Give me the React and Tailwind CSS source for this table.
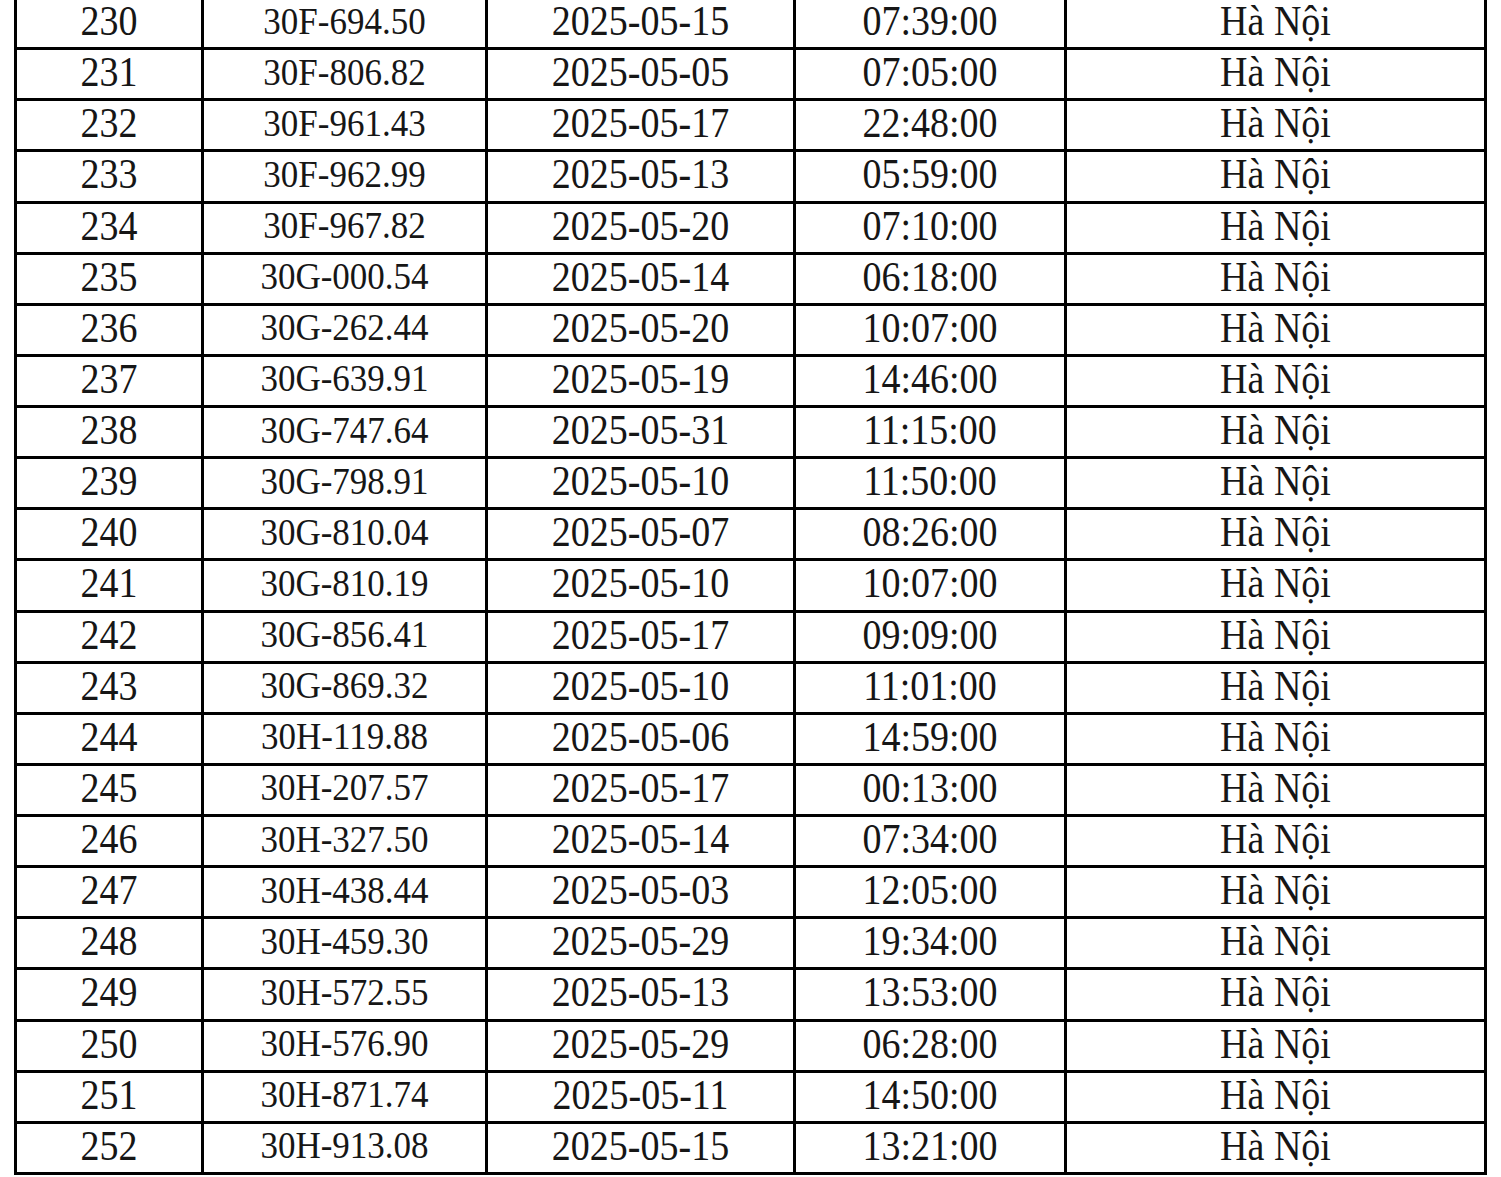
const ROWS = [
  ['230', '30F-694.50', '2025-05-15', '07:39:00'],
  ['231', '30F-806.82', '2025-05-05', '07:05:00'],
  ['232', '30F-961.43', '2025-05-17', '22:48:00'],
  ['233', '30F-962.99', '2025-05-13', '05:59:00'],
  ['234', '30F-967.82', '2025-05-20', '07:10:00'],
  ['235', '30G-000.54', '2025-05-14', '06:18:00'],
  ['236', '30G-262.44', '2025-05-20', '10:07:00'],
  ['237', '30G-639.91', '2025-05-19', '14:46:00'],
  ['238', '30G-747.64', '2025-05-31', '11:15:00'],
  ['239', '30G-798.91', '2025-05-10', '11:50:00'],
  ['240', '30G-810.04', '2025-05-07', '08:26:00'],
  ['241', '30G-810.19', '2025-05-10', '10:07:00'],
  ['242', '30G-856.41', '2025-05-17', '09:09:00'],
  ['243', '30G-869.32', '2025-05-10', '11:01:00'],
  ['244', '30H-119.88', '2025-05-06', '14:59:00'],
  ['245', '30H-207.57', '2025-05-17', '00:13:00'],
  ['246', '30H-327.50', '2025-05-14', '07:34:00'],
  ['247', '30H-438.44', '2025-05-03', '12:05:00'],
  ['248', '30H-459.30', '2025-05-29', '19:34:00'],
  ['249', '30H-572.55', '2025-05-13', '13:53:00'],
  ['250', '30H-576.90', '2025-05-29', '06:28:00'],
  ['251', '30H-871.74', '2025-05-11', '14:50:00'],
  ['252', '30H-913.08', '2025-05-15', '13:21:00'],
];

function Cell({ children, small }) {
  return (
    <div
      className={`flex items-center justify-center border-r-[3px] border-black pb-[4px] ${
        small ? 'text-[35px]' : 'text-[38px]'
      }`}
    >
      <span className="inline-block scale-y-110">{children}</span>
    </div>
  );
}

export default function App() {
  return (
    <div className="h-[1177px] w-[1501px] overflow-hidden bg-white">
      <div
        className="-mt-[4px] ml-[14px] w-[1473px] border-l-[3px] border-t-[3px] border-black text-[#161616]"
        style={{ fontFamily: '"Liberation Serif", "Times New Roman", serif' }}
      >
        {ROWS.map(([no, plate, date, time]) => (
          <div
            key={no}
            className="grid h-[51.14px] grid-cols-[187px_284px_308px_271px_420px] border-b-[3px] border-black leading-none"
          >
            <Cell>{no}</Cell>
            <Cell small>{plate}</Cell>
            <Cell>{date}</Cell>
            <Cell>{time}</Cell>
            <Cell>Hà Nội</Cell>
          </div>
        ))}
      </div>
    </div>
  );
}
